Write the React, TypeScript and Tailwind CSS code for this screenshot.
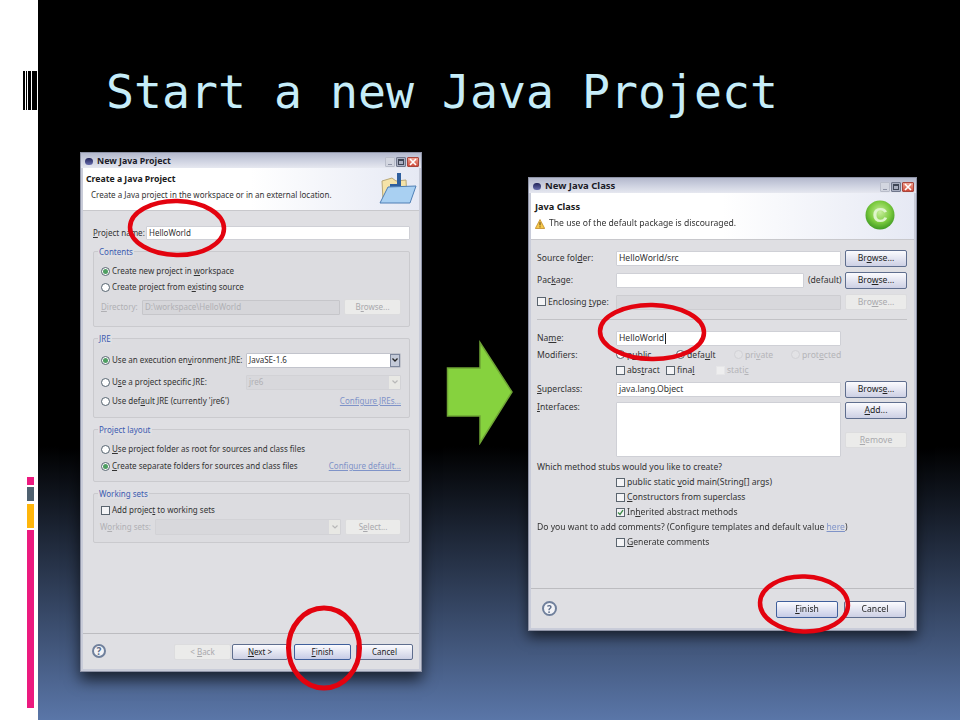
import React from "react";

const U = ({ children }: { children: React.ReactNode }) => <u className="underline underline-offset-1">{children}</u>;

function Btn({ w, disabled, focus, className = "", children }: { w: string; disabled?: boolean; focus?: boolean; className?: string; children: React.ReactNode }) {
  const look = disabled
    ? "border-[#dcdcde] bg-[#ebebea] text-[#a9a9ad]"
    : focus
    ? "border-[#3f5f9c] bg-gradient-to-b from-[#fbfbfe] to-[#c6cbe6] text-[#222]"
    : "border-[#5f6e8e] bg-gradient-to-b from-[#fbfbfe] to-[#cdd0e4] text-[#222]";
  return (
    <div className={`${w} flex items-center justify-center rounded-[2px] border ${look} ${className}`}>
      <span>{children}</span>
    </div>
  );
}

function Radio({ on, disabled }: { on?: boolean; disabled?: boolean }) {
  return (
    <span className={`mr-[2px] flex h-[9px] w-[9px] shrink-0 items-center justify-center rounded-full border ${disabled ? "border-[#d2d2d6] bg-[#e2e2e5]" : "border-[#55636f] bg-white"}`}>
      {on && <span className="h-[5px] w-[5px] rounded-full bg-[#4f9e62]" />}
    </span>
  );
}

function Check({ on, disabled }: { on?: boolean; disabled?: boolean }) {
  return (
    <span className={`mr-[2px] flex h-[9px] w-[9px] shrink-0 items-center justify-center border ${disabled ? "border-[#e6e6e8] bg-[#eeeeef]" : "border-[#5a646e] bg-[#f4f4f6]"}`}>
      {on && (
        <svg width="7" height="7" viewBox="0 0 7 7">
          <path d="M1 3.5 L3 5.5 L6 1.2" fill="none" stroke="#3f8a4a" strokeWidth="1.4" />
        </svg>
      )}
    </span>
  );
}

function Group({ title, h, pt, mt, children }: { title: string; h: string; pt: string; mt: string; children: React.ReactNode }) {
  return (
    <div className={`relative ${h} ${pt} ${mt} rounded-[2px] border border-[#cacace] bg-[#dcdce0]`}>
      <span className="absolute -top-[6px] left-[4px] bg-[#dfdfe3] px-[1px] leading-[11px] text-[#3c5bb0]">{title}</span>
      {children}
    </div>
  );
}

function TitleBar({ title, size }: { title: string; size: string }) {
  return (
    <div className={`flex h-[15px] shrink-0 items-center bg-gradient-to-b from-[#b4b9cd] via-[#cdd1e0] to-[#e6e8f0] pl-[4px] pr-[2px] pt-[2px] font-bold text-[#1c1c28] ${size}`}>
      <span className="mr-[4px] h-[7px] w-[8px] rounded-full bg-gradient-to-b from-[#22245a] to-[#6a6fb0]" />
      <span>{title}</span>
      <span className="ml-auto flex items-center gap-[1px]">
        <span className="flex h-[10px] w-[10px] items-end justify-center rounded-[1px] border border-[#b9bdca] bg-[#d3d6e0] pb-[1px]">
          <span className="h-[1px] w-[4px] bg-[#8e93a5]" />
        </span>
        <span className="flex h-[10px] w-[10px] items-center justify-center rounded-[1px] border border-[#70778c] bg-[#a9aec0]">
          <span className="h-[6px] w-[6px] border border-t-2 border-[#3e4556]" />
        </span>
        <span className="flex h-[10px] w-[12px] items-center justify-center rounded-[1px] border border-[#a8453c] bg-gradient-to-b from-[#f0a090] to-[#cf4a3a]">
          <svg width="8" height="8" viewBox="0 0 8 8">
            <path d="M1 1 L7 7 M7 1 L1 7" stroke="#fff" strokeWidth="1.6" />
          </svg>
        </span>
      </span>
    </div>
  );
}

function Help({ size }: { size: string }) {
  return (
    <span className={`${size} flex shrink-0 items-center justify-center rounded-full border-2 border-[#70809c] bg-[#f2f3f7] text-[10px] font-bold leading-none text-[#5c6c8a]`}>?</span>
  );
}

function RedRing({ pos, w, h, rx, ry, sw, rot }: { pos: string; w: number; h: number; rx: number; ry: number; sw: number; rot: number }) {
  return (
    <svg className={`absolute ${pos}`} width={w} height={h} viewBox={`0 0 ${w} ${h}`}>
      <ellipse cx={w / 2} cy={h / 2} rx={rx} ry={ry} fill="none" stroke="#e3030f" strokeWidth={sw} transform={`rotate(${rot} ${w / 2} ${h / 2})`} />
    </svg>
  );
}

const Box = ({ className = "", children }: { className?: string; children?: React.ReactNode }) => (
  <div className={`flex items-center rounded-[1px] border pl-[2px] ${className}`}>{children}</div>
);

function ProjectDialog() {
  return (
    <div className="absolute left-[80px] top-[152px] flex h-[520px] w-[342px] flex-col whitespace-nowrap border border-[#8e93a6] bg-[#c9ccd9] text-[8px] shadow-[0_8px_14px_rgba(0,0,0,0.65)]">
      <TitleBar title="New Java Project" size="text-[8.8px]" />
      <div className="mx-[2px] mb-[2px] flex flex-1 flex-col bg-[#dfdfe3]">
        <div className="relative h-[43px] shrink-0 border-b border-[#c8c8cc] bg-gradient-to-r from-white via-white to-[#e6e9f4] pl-[3px] pt-[5px]">
          <div className="text-[8.7px] font-bold leading-[13px] text-[#1a1a1a]">Create a Java Project</div>
          <div className="ml-[5px] mt-[2px] leading-[13px] text-[#333]">Create a Java project in the workspace or in an external location.</div>
          <svg className="absolute right-[1px] top-[5px]" width="40" height="32" viewBox="0 0 40 32">
            <path d="M4 8 L14 5 L18 8 L28 7 L29 26 L5 27 Z" fill="#f5e3a8" stroke="#b9a878" strokeWidth="1" />
            <path d="M19 0 H23 V14 H12 V11 H19 Z" fill="#2f5f9e" />
            <path d="M2 30 L10 14 L38 13 L32 30 Z" fill="#a9d0f2" stroke="#4f7fb5" strokeWidth="1" />
          </svg>
        </div>
        <div className="flex flex-1 flex-col pl-[10px] pr-[9px]">
          <div className="mt-[15px] flex h-[14px] items-center text-[#333]">
            <span className="w-[53px]"><U>P</U>roject name:</span>
            <Box className="h-[14px] flex-1 border-[#cfd0d6] bg-white"><span>HelloWorld</span></Box>
          </div>
          <Group title="Contents" h="h-[76px]" pt="pt-[11px]" mt="mt-[11px]">
            <div className="ml-[7px] flex h-[16px] items-center text-[#333]"><Radio on /><span>Create new project in <U>w</U>orkspace</span></div>
            <div className="ml-[7px] flex h-[16px] items-center text-[#333]"><Radio /><span>Create project from e<U>x</U>isting source</span></div>
            <div className="mt-[4px] flex h-[16px] items-center pl-[7px] text-[#b0b0b4]">
              <span className="w-[41px]"><U>D</U>irectory:</span>
              <Box className="h-[15px] w-[198px] border-[#c6c6ca] bg-[#d6d6da]">D:\workspace\HelloWorld</Box>
              <Btn w="w-[57px]" disabled className="ml-[4px] h-[16px]">B<U>r</U>owse...</Btn>
            </div>
          </Group>
          <Group title="JRE" h="h-[80px]" pt="pt-[13px]" mt="mt-[11px]">
            <div className="ml-[7px] flex h-[16px] items-center text-[#333]">
              <Radio on /><span className="w-[134px]">Use an execution en<U>v</U>ironment JRE:</span>
              <Box className="h-[15px] w-[155px] border-[#c2c4cc] bg-white pr-0">
                JavaSE-1.6
                <span className="ml-auto flex h-full w-[10px] items-center justify-center border border-[#7c869c] bg-[#c4cad8] text-[#222]">
                  <svg width="6" height="4" viewBox="0 0 6 4"><path d="M0.5 0.5 L3 3 L5.5 0.5" fill="none" stroke="#222" strokeWidth="1.3" /></svg>
                </span>
              </Box>
            </div>
            <div className="ml-[7px] mt-[6px] flex h-[16px] items-center text-[#333]">
              <Radio /><span className="w-[134px]">U<U>s</U>e a project specific JRE:</span>
              <Box className="h-[15px] w-[155px] border-[#d2d2d6] bg-[#d8d8dc] pr-0 text-[#b0b0b4]">
                jre6
                <span className="ml-auto flex h-full w-[11px] items-center justify-center bg-[#e8e8e4]">
                  <svg width="6" height="4" viewBox="0 0 6 4"><path d="M0.5 0.5 L3 3 L5.5 0.5" fill="none" stroke="#b8b8b8" strokeWidth="1.2" /></svg>
                </span>
              </Box>
            </div>
            <div className="ml-[7px] mt-[3px] flex h-[16px] items-center text-[#333]">
              <Radio /><span>Use def<U>a</U>ult JRE (currently 'jre6')</span>
              <span className="ml-auto mr-[8px] text-[#7f93c8] underline">Configure JREs...</span>
            </div>
          </Group>
          <Group title="Project layout" h="h-[53px]" pt="pt-[11px]" mt="mt-[11px]">
            <div className="ml-[7px] flex h-[16px] items-center text-[#333]"><Radio /><span><U>U</U>se project folder as root for sources and class files</span></div>
            <div className="ml-[7px] mt-[1px] flex h-[16px] items-center text-[#333]">
              <Radio on /><span><U>C</U>reate separate folders for sources and class files</span>
              <span className="ml-auto mr-[8px] text-[#7f93c8] underline">Configure default...</span>
            </div>
          </Group>
          <Group title="Working sets" h="h-[50px]" pt="pt-[8px]" mt="mt-[11px]">
            <div className="ml-[7px] flex h-[16px] items-center text-[#333]"><Check /><span>Add projec<U>t</U> to working sets</span></div>
            <div className="mt-[1px] flex h-[16px] items-center pl-[6px] text-[#b0b0b4]">
              <span className="w-[55px]">W<U>o</U>rking sets:</span>
              <Box className="h-[16px] w-[186px] border-[#d2d2d6] bg-[#d8d8dc] pr-0">
                <span className="ml-auto flex h-full w-[11px] items-center justify-center bg-[#e8e8e4]">
                  <svg width="6" height="4" viewBox="0 0 6 4"><path d="M0.5 0.5 L3 3 L5.5 0.5" fill="none" stroke="#b8b8b8" strokeWidth="1.2" /></svg>
                </span>
              </Box>
              <Btn w="w-[56px]" disabled className="ml-[4px] h-[16px]">S<U>e</U>lect...</Btn>
            </div>
          </Group>
        </div>
        <div className="flex h-[36px] shrink-0 items-start border-t border-[#bcbcc0] pl-[9px] pr-[6px] pt-[10px] text-[#222]">
          <Help size="h-[14px] w-[14px]" />
          <div className="ml-auto flex">
            <Btn w="w-[57px]" disabled className="h-[16px]">&lt; <U>B</U>ack</Btn>
            <Btn w="w-[56px]" className="ml-[1px] h-[16px]"><U>N</U>ext &gt;</Btn>
            <Btn w="w-[57px]" focus className="ml-[6px] h-[16px]"><U>F</U>inish</Btn>
            <Btn w="w-[57px]" className="ml-[5px] h-[16px]">Cancel</Btn>
          </div>
        </div>
      </div>
    </div>
  );
}

function ClassDialog() {
  const row = "flex items-center text-[#333]";
  const label = "w-[79px] shrink-0";
  const field = "h-[15px] w-[225px] border-[#cfd0d6] bg-white";
  return (
    <div className="absolute left-[528px] top-[177px] flex h-[454px] w-[389px] flex-col whitespace-nowrap border border-[#8e93a6] bg-[#c9ccd9] text-[8.6px] shadow-[0_6px_12px_rgba(0,0,0,0.6)]">
      <TitleBar title="New Java Class" size="text-[9.5px]" />
      <div className="mx-[2px] mb-[2px] flex flex-1 flex-col bg-[#dfdfe3]">
        <div className="relative h-[47px] shrink-0 border-b border-[#c8c8cc] bg-gradient-to-r from-white via-white to-[#e6e9f4] pl-[4px] pt-[7px]">
          <div className="text-[9.2px] font-bold leading-[13px] text-[#1a1a1a]">Java Class</div>
          <div className="mt-[4px] flex items-center leading-[13px] text-[#333]">
            <svg className="mr-[4px]" width="10" height="10" viewBox="0 0 10 10">
              <path d="M5 0.5 L9.7 9.5 H0.3 Z" fill="#f5c84a" stroke="#c08a2a" strokeWidth="0.8" />
              <path d="M5 3.2 V6.4 M5 7.3 V8.4" stroke="#5a3c10" strokeWidth="1" />
            </svg>
            <span>The use of the default package is discouraged.</span>
          </div>
          <svg className="absolute right-[19px] top-[7px]" width="30" height="30" viewBox="0 0 30 30">
            <defs>
              <radialGradient id="g" cx="50%" cy="40%" r="60%">
                <stop offset="0%" stopColor="#c8ee9c" />
                <stop offset="60%" stopColor="#7ccb3f" />
                <stop offset="100%" stopColor="#3f9a22" />
              </radialGradient>
            </defs>
            <circle cx="15" cy="15" r="14.5" fill="url(#g)" />
            <text x="15" y="22" textAnchor="middle" fontSize="21" fontWeight="700" fontFamily="Liberation Sans, sans-serif" fill="#dff5cc">C</text>
          </svg>
        </div>
        <div className="flex flex-1 flex-col pl-[6px]">
          <div className={`${row} mt-[9px] h-[18px]`}>
            <span className={label}>Source fol<U>d</U>er:</span>
            <Box className={field}>HelloWorld/src</Box>
            <Btn w="w-[62px]" className="ml-[4px] h-[17px]">Br<U>o</U>wse...</Btn>
          </div>
          <div className={`${row} mt-[4px] h-[18px]`}>
            <span className={label}>Pac<U>k</U>age:</span>
            <Box className="h-[15px] w-[188px] border-[#cfd0d6] bg-white" />
            <span className="w-[37px] pl-[4px]">(default)</span>
            <Btn w="w-[62px]" className="ml-[4px] h-[17px]">Bro<U>w</U>se...</Btn>
          </div>
          <div className={`${row} mt-[4px] h-[18px]`}>
            <span className={`${label} flex items-center`}><Check /><span>Enclosing <U>t</U>ype:</span></span>
            <Box className="h-[15px] w-[225px] border-[#cdcdd1] bg-[#d8d8dc]" />
            <Btn w="w-[62px]" disabled className="ml-[4px] h-[16px]">Bro<U>w</U>se...</Btn>
          </div>
          <div className="mr-[7px] mt-[8px] h-[1px] bg-[#c2c2c6]" />
          <div className={`${row} mt-[9px] h-[18px]`}>
            <span className={label}>Na<U>m</U>e:</span>
            <Box className={field}>HelloWorld<span className="ml-[1px] inline-block h-[11px] w-[1px] bg-[#222]" /></Box>
          </div>
          <div className={`${row} h-[16px]`}>
            <span className={label}>Modifiers:</span>
            <span className="flex w-[60px] items-center"><Radio /><span>p<U>u</U>blic</span></span>
            <span className="flex w-[58px] items-center"><Radio /><span>defa<U>u</U>lt</span></span>
            <span className="flex w-[57px] items-center text-[#b4b4b8]"><Radio disabled /><span>pri<U>v</U>ate</span></span>
            <span className="flex items-center text-[#b4b4b8]"><Radio disabled /><span>prot<U>e</U>cted</span></span>
          </div>
          <div className={`${row} h-[15px]`}>
            <span className={label} />
            <span className="flex w-[50px] items-center"><Check /><span>abs<U>t</U>ract</span></span>
            <span className="flex w-[50px] items-center"><Check /><span>fina<U>l</U></span></span>
            <span className="flex items-center text-[#b4b4b8]"><Check disabled /><span>stati<U>c</U></span></span>
          </div>
          <div className={`${row} mt-[2px] h-[18px]`}>
            <span className={label}><U>S</U>uperclass:</span>
            <Box className={field}>java.lang.Object</Box>
            <Btn w="w-[62px]" className="ml-[4px] h-[17px]">Brows<U>e</U>...</Btn>
          </div>
          <div className="mt-[4px] flex h-[55px] text-[#333]">
            <span className={`${label} leading-[11px]`}><U>I</U>nterfaces:</span>
            <div className="h-[55px] w-[225px] rounded-[1px] border border-[#cfd0d6] bg-white" />
            <div className="ml-[4px] flex w-[62px] flex-col">
              <Btn w="w-[62px]" className="h-[17px]"><U>A</U>dd...</Btn>
              <Btn w="w-[62px]" disabled className="mt-[13px] h-[16px]"><U>R</U>emove</Btn>
            </div>
          </div>
          <div className={`${row} mt-[3px] h-[15px]`}>Which method stubs would you like to create?</div>
          <div className={`${row} h-[15px] pl-[79px]`}><Check /><span>public static <U>v</U>oid main(String[] args)</span></div>
          <div className={`${row} h-[15px] pl-[79px]`}><Check /><span><U>C</U>onstructors from superclass</span></div>
          <div className={`${row} h-[15px] pl-[79px]`}><Check on /><span>In<U>h</U>erited abstract methods</span></div>
          <div className={`${row} h-[15px]`}>
            <span>Do you want to add comments? (Configure templates and default value <span className="text-[#7f93c8] underline">here</span>)</span>
          </div>
          <div className={`${row} h-[15px] pl-[79px]`}><Check /><span><U>G</U>enerate comments</span></div>
        </div>
        <div className="flex h-[40px] shrink-0 items-start border-t border-[#bcbcc0] pl-[11px] pr-[8px] pt-[12px] text-[#222]">
          <Help size="h-[15px] w-[15px]" />
          <div className="ml-auto flex">
            <Btn w="w-[62px]" focus className="h-[17px]"><U>F</U>inish</Btn>
            <Btn w="w-[62px]" className="ml-[6px] h-[17px]">Cancel</Btn>
          </div>
        </div>
      </div>
    </div>
  );
}

export default function App() {
  return (
    <div className="flex h-[720px] w-[960px] overflow-hidden bg-white font-['Noto_Sans',sans-serif]">
      <div className="w-[38px] shrink-0">
        <div className="ml-[23px] mt-[71px] flex h-[39px] w-[14px]">
          <span className="w-[2px] bg-black" />
          <span className="ml-[1px] w-[1px] bg-black" />
          <span className="ml-[1px] w-[3px] bg-black" />
          <span className="ml-[1px] w-[5px] bg-black" />
        </div>
        <div className="ml-[27px] mt-[367px] w-[7px]">
          <div className="h-[8px] bg-[#ec1a7f]" />
          <div className="mt-[2px] h-[14px] bg-[#4f6170]" />
          <div className="mt-[3px] h-[24px] bg-[#ffb60b]" />
          <div className="mt-[2px] h-[178px] bg-[#ec1a7f]" />
        </div>
      </div>
      <div className="flex-1 bg-[linear-gradient(to_bottom,#000_0%,#000_62%,#5a76a8_100%)] pl-[68px] pt-[64px]">
        <h1 className="font-['DejaVu_Sans_Mono',monospace] text-[46.5px] font-normal leading-[56px] text-[#c6edf9]">Start a new Java Project</h1>
      </div>
      <div className="absolute left-0 top-0 h-[720px] w-[960px] blur-[0.35px]">
        <ProjectDialog />
        <svg className="absolute left-[446px] top-[340px]" width="68" height="105" viewBox="0 0 68 105">
          <path d="M1.5 28 H34 V2.5 L66 52 L34 103 V76 H1.5 Z" fill="#86d23e" stroke="#6fa535" strokeWidth="1.5" />
        </svg>
        <ClassDialog />
      </div>
      <RedRing pos="left-[124px] top-[195px]" w={106} h={66} rx={47} ry={27} sw={4.5} rot={1} />
      <RedRing pos="left-[282px] top-[602px]" w={84} h={92} rx={35.5} ry={40} sw={5} rot={0} />
      <RedRing pos="left-[594px] top-[298px]" w={116} h={68} rx={52} ry={27} sw={4.5} rot={1} />
      <RedRing pos="left-[754px] top-[570px]" w={100} h={68} rx={44} ry={27.5} sw={4.5} rot={2} />
    </div>
  );
}
